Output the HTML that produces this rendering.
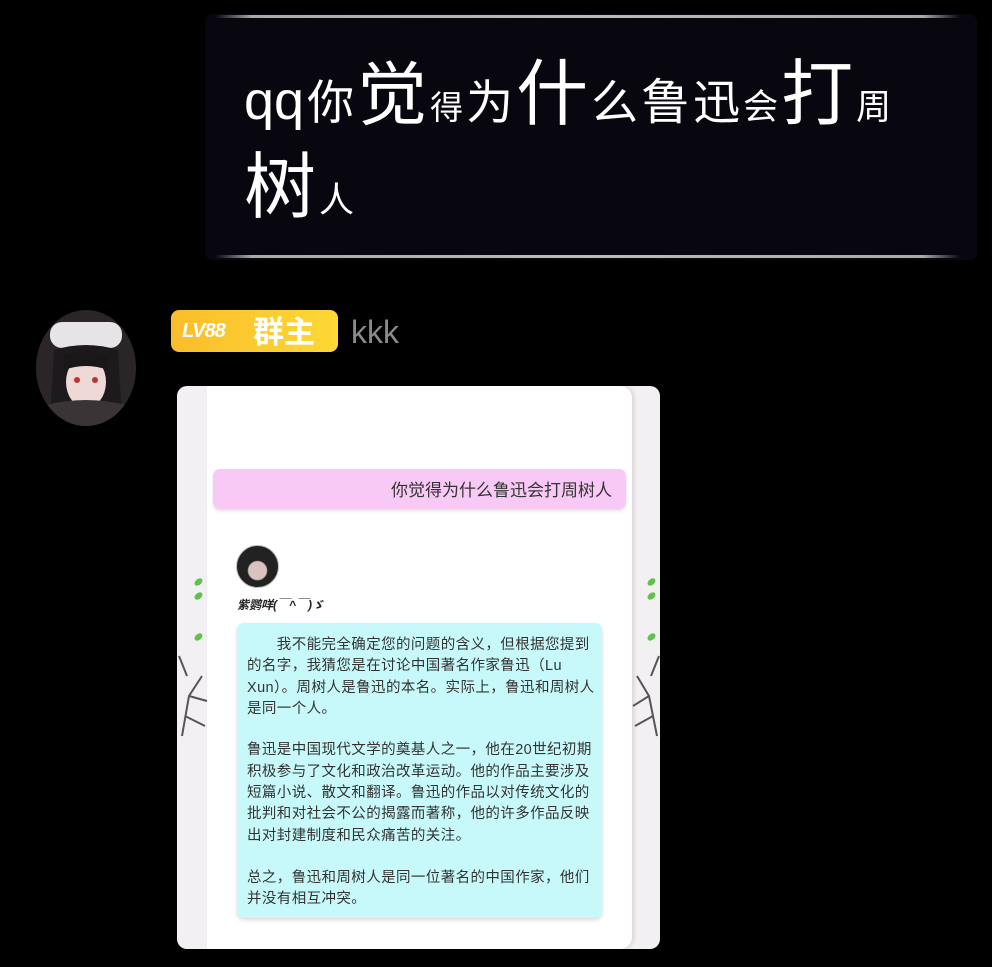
<!DOCTYPE html>
<html><head><meta charset="utf-8"><style>
*{margin:0;padding:0;box-sizing:border-box}
body{width:992px;height:967px;background:#000;position:relative;overflow:hidden;font-family:"Liberation Sans","Noto Sans CJK SC",sans-serif}
.abs{position:absolute}
.title{left:205px;top:14px;width:772px;height:246px;background:#08070f;border-radius:8px}
.hl{height:3px;background:linear-gradient(90deg,transparent,#aaa 5%,#bbb 50%,#aaa 95%,transparent)}
.t{color:#fff;white-space:nowrap;font-family:"Noto Sans CJK SC",sans-serif;line-height:1}
.t span{display:inline-block;margin-right:3px}
.av{left:36px;top:310px;width:100px;height:116px;border-radius:50%;overflow:hidden}
.badge{left:171px;top:310px;width:167px;height:42px;border-radius:8px;background:linear-gradient(90deg,#fbbd2b,#fdd836);color:#fff;font-weight:bold}
.card{left:177px;top:386px;width:483px;height:563px;border-radius:10px;background:#f3f0f3;overflow:hidden}
.inner{left:30px;top:0;width:425px;height:563px;background:#fff;border-radius:0 12px 12px 0;box-shadow:2px 0 4px rgba(0,0,0,.12)}
.pink{left:213px;top:469px;width:413px;height:40px;background:#f9c9f6;border-radius:7px;box-shadow:0 2px 3px rgba(0,0,0,.12);color:#333;font-size:17px;text-align:right;padding:9px 14px 0 0;line-height:1.3}
.cyan{left:237px;top:623px;width:365px;height:295px;background:#c8f9fa;border-radius:7px;box-shadow:0 2px 4px rgba(0,0,0,.15)}
.ln{position:absolute;left:10px;font-size:14.5px;color:#333;white-space:nowrap;letter-spacing:0.4px}
.leaf{width:9px;height:6px;background:#5fc24a;border-radius:50%;transform:rotate(-40deg)}
</style></head><body>
<div class="abs title"></div>
<div class="abs hl" style="left:215px;top:15px;width:745px"></div>
<div class="abs hl" style="left:215px;top:255px;width:745px"></div>
<div class="abs t" style="left:244px;top:52px;height:80px">
<span style="font-family:'Liberation Sans';font-size:54px">qq</span><span style="font-size:47px">你</span><span style="font-size:70px">觉</span><span style="font-size:33px">得</span><span style="font-size:47px">为</span><span style="font-size:72px">什</span><span style="font-size:47px">么</span><span style="font-size:49px">鲁</span><span style="font-size:47px">迅</span><span style="font-size:35px">会</span><span style="font-size:72px">打</span><span style="font-size:35px">周</span>
</div>
<div class="abs t" style="left:244px;top:145px"><span style="font-size:72px">树</span><span style="font-size:35px">人</span></div>

<div class="abs av"><svg width="100" height="116" viewBox="0 0 100 116">
<rect width="100" height="116" fill="#2a2526"/>
<rect x="14" y="12" width="72" height="26" rx="12" fill="#e6e4e6"/>
<path d="M18 40 Q50 30 82 40 L86 110 L14 110Z" fill="#1c1a1c"/>
<ellipse cx="50" cy="72" rx="20" ry="26" fill="#eed9d6"/>
<path d="M28 45 Q50 38 72 45 L72 60 Q50 52 28 60Z" fill="#1a1718"/>
<circle cx="41" cy="70" r="3" fill="#b33"/><circle cx="59" cy="70" r="3" fill="#b33"/>
<path d="M0 116 L10 95 Q50 85 90 95 L100 116Z" fill="#3b3436"/>
</svg></div>
<div class="abs badge"><span class="abs" style="left:11px;top:10px;font-size:20px;line-height:22px;font-style:italic;letter-spacing:-1px">LV88</span><span class="abs" style="left:82px;top:1px;font-size:31px;line-height:38px;font-family:'Noto Sans CJK SC',sans-serif">群主</span></div>
<div class="abs" style="left:351px;top:314px;font-size:32px;color:#8b8b8b">kkk</div>

<div class="abs card"><div class="abs inner"></div>
<div class="abs leaf" style="left:17px;top:193px"></div><div class="abs leaf" style="left:17px;top:207px"></div><div class="abs leaf" style="left:17px;top:248px"></div>
<div class="abs leaf" style="left:470px;top:193px"></div><div class="abs leaf" style="left:470px;top:207px"></div><div class="abs leaf" style="left:470px;top:248px"></div>
<svg class="abs" style="left:0;top:250px" width="40" height="110"><path d="M5 100 L12 60 L25 40 M12 60 L30 65 M8 80 L28 90 M10 40 L2 20" stroke="#555" stroke-width="2" fill="none"/></svg>
<svg class="abs" style="left:452px;top:250px" width="31" height="110"><path d="M28 100 L20 60 L8 40 M20 60 L4 70 M24 80 L6 90 M22 40 L30 20" stroke="#555" stroke-width="2" fill="none"/></svg>
</div>
<div class="abs pink" style="font-family:'Noto Sans CJK SC',sans-serif">你觉得为什么鲁迅会打周树人</div>
<div class="abs" style="left:236px;top:545px;width:43px;height:43px;border-radius:50%;background:radial-gradient(circle at 50% 60%,#d9c3c0 0 28%,#222 32%);border:1px solid #bbb"></div>
<div class="abs" style="left:237px;top:596px;font-size:12px;font-weight:bold;font-style:italic;color:#222">紫鹦咩(￣^￣)ゞ</div>
<div class="abs cyan">
<div class="ln" style="top:10px">　　我不能完全确定您的问题的含义，但根据您提到</div>
<div class="ln" style="top:31px">的名字，我猜您是在讨论中国著名作家鲁迅（Lu</div>
<div class="ln" style="top:53px">Xun）。周树人是鲁迅的本名。实际上，鲁迅和周树人</div>
<div class="ln" style="top:74px">是同一个人。</div>
<div class="ln" style="top:115px">鲁迅是中国现代文学的奠基人之一，他在20世纪初期</div>
<div class="ln" style="top:137px">积极参与了文化和政治改革运动。他的作品主要涉及</div>
<div class="ln" style="top:158px">短篇小说、散文和翻译。鲁迅的作品以对传统文化的</div>
<div class="ln" style="top:179px">批判和对社会不公的揭露而著称，他的许多作品反映</div>
<div class="ln" style="top:201px">出对封建制度和民众痛苦的关注。</div>
<div class="ln" style="top:243px">总之，鲁迅和周树人是同一位著名的中国作家，他们</div>
<div class="ln" style="top:264px">并没有相互冲突。</div>
</div>
</body></html>
